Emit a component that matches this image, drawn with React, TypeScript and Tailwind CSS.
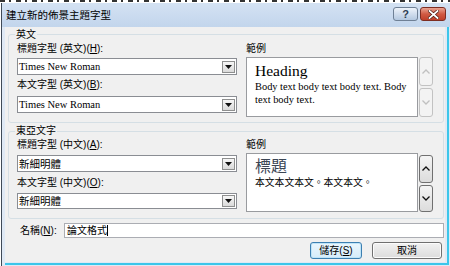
import React from "react";

const ui = "font-['Liberation_Sans','Noto_Sans_CJK_TC',sans-serif]";
const serif = "font-['Liberation_Serif',serif]";

function DropArrow() {
  return (
    <div className="w-[13px] h-[12px] mr-[1px] border border-[#8e8f8f] bg-gradient-to-b from-[#f7f7f7] to-[#dadada] flex items-center justify-center">
      <svg width="7" height="4" viewBox="0 0 7 4">
        <path d="M0 0 H7 L3.5 4 Z" fill="#111" />
      </svg>
    </div>
  );
}

function Select({ value, serifFont, h }: { value: string; serifFont?: boolean; h: string }) {
  return (
    <div className={`${h} w-full bg-white border border-[#8a8d93] flex items-center justify-between`}>
      <span className={`pl-[1px] text-[10.5px] leading-[12px] text-black ${serifFont ? serif : ui}`}>{value}</span>
      <DropArrow />
    </div>
  );
}

function Spin({ enabled }: { enabled: boolean }) {
  const box = enabled
    ? "border-[#707070] bg-gradient-to-b from-[#f4f4f4] to-[#dcdcdc]"
    : "border-[#c2c2c2] bg-[#f3f3f3]";
  const stroke = enabled ? "#111" : "#c0c0c0";
  return (
    <div className="w-[14px] h-full flex flex-col gap-[2px]">
      <div className={`flex-1 rounded-[3px] border ${box} flex items-center justify-center`}>
        <svg width="8" height="5" viewBox="0 0 8 5">
          <path d="M0.5 4.5 L4 1 L7.5 4.5" fill="none" stroke={stroke} strokeWidth="1.3" />
        </svg>
      </div>
      <div className={`flex-1 rounded-[3px] border ${box} flex items-center justify-center`}>
        <svg width="8" height="5" viewBox="0 0 8 5">
          <path d="M0.5 0.5 L4 4 L7.5 0.5" fill="none" stroke={stroke} strokeWidth="1.3" />
        </svg>
      </div>
    </div>
  );
}

function Label({ children }: { children: React.ReactNode }) {
  return <div className={`h-[12px] text-[10px] leading-[12px] text-black whitespace-nowrap ${ui}`}>{children}</div>;
}

export default function App() {
  return (
    <div className={`w-[450px] h-[266px] bg-white overflow-hidden flex flex-col ${ui}`}>
      {/* cropped content above */}
      <div className="h-[3px] bg-white flex items-start">
        <div className="w-full h-[2px] bg-[repeating-linear-gradient(90deg,#333_0_5px,#fff_5px_9px,#333_9px_11px,#fff_11px_16px)]" />
      </div>
      {/* window */}
      <div className="flex-1 flex flex-col ml-[1px] border-l border-[#3f4a57] bg-[#dfe9f5]">
        {/* title bar */}
        <div className="h-[24px] flex items-start justify-between bg-gradient-to-b from-[#d4e2f3] to-[#c2d5ec]">
          <div className="pl-[4px] h-full flex items-center text-[10.5px] leading-[12px] text-black">建立新的佈景主題字型</div>
          <div className="flex gap-[2px] pt-[4px] pr-[4px]">
            <div className="w-[25px] h-[14px] rounded-[3px] border border-[#6f8095] bg-gradient-to-b from-[#eef3fa] to-[#b4c8e0] flex items-center justify-center">
              <span className="text-[11px] leading-[12px] font-bold text-[#2c3d52] font-['Liberation_Sans',sans-serif]">?</span>
            </div>
            <div className="w-[26px] h-[14px] rounded-[3px] border border-[#7d2d22] bg-gradient-to-b from-[#e9a392] via-[#d15a43] to-[#c0402a] flex items-center justify-center">
              <svg width="11" height="9" viewBox="0 0 11 9">
                <path d="M1.5 1 L9.5 8 M9.5 1 L1.5 8" stroke="#4a1810" strokeWidth="3.2" strokeLinecap="square" />
                <path d="M1.5 1 L9.5 8 M9.5 1 L1.5 8" stroke="#fff" strokeWidth="1.8" strokeLinecap="square" />
              </svg>
            </div>
          </div>
        </div>
        {/* frame around client */}
        <div className="flex-1 flex pl-[3px] pr-[1px] pb-[1px]">
          <div className="flex-1 flex border-r-[2px] border-b-[2px] border-[#3cc6ea]">
            <div className="flex-1 flex mr-[2px] mb-[1px]">
              {/* client */}
              <div className="flex-1 bg-[#f0f0f0] flex flex-col pl-[3px] pr-[1px]">
                {/* Group 1 */}
                <div className="relative mt-[7px] border border-[#d5dfe5] rounded-[3px] pt-[8px] pb-[5px] pl-[8px] pr-[9px] flex gap-[9px]">
                  <div className="absolute left-[6px] top-[-6px] px-[1px] bg-[#f0f0f0]">
                    <Label>英文</Label>
                  </div>
                  <div className="w-[220px] flex flex-col">
                    <Label>
                      標題字型 (英文)(<span className="underline">H</span>):
                    </Label>
                    <div className="mt-[3px]">
                      <Select value="Times New Roman" serifFont h="h-[17px]" />
                    </div>
                    <div className="mt-[4px]">
                      <Label>
                        本文字型 (英文)(<span className="underline">B</span>):
                      </Label>
                    </div>
                    <div className="mt-[5px]">
                      <Select value="Times New Roman" serifFont h="h-[17px]" />
                    </div>
                  </div>
                  <div className="flex-1 flex flex-col">
                    <Label>範例</Label>
                    <div className="mt-[2px] h-[60px] flex gap-[1px]">
                      <div className={`w-[172px] h-full bg-white border border-[#999b9f] pl-[8px] pt-[3px] ${serif} text-black`}>
                        <div className="text-[15.5px] leading-[19px]">Heading</div>
                        <div className="text-[10.4px] leading-[13px] pr-[4px]">Body text body text body text. Body text body text.</div>
                      </div>
                      <Spin enabled={false} />
                    </div>
                  </div>
                </div>
                {/* Group 2 */}
                <div className="relative mt-[8px] border border-[#d5dfe5] rounded-[3px] pt-[7px] pb-[6px] pl-[8px] pr-[9px] flex gap-[9px]">
                  <div className="absolute left-[6px] top-[-7px] px-[1px] bg-[#f0f0f0]">
                    <Label>東亞文字</Label>
                  </div>
                  <div className="w-[220px] flex flex-col">
                    <Label>
                      標題字型 (中文)(<span className="underline">A</span>):
                    </Label>
                    <div className="mt-[4px]">
                      <Select value="新細明體" h="h-[17px]" />
                    </div>
                    <div className="mt-[5px]">
                      <Label>
                        本文字型 (中文)(<span className="underline">O</span>):
                      </Label>
                    </div>
                    <div className="mt-[4px]">
                      <Select value="新細明體" h="h-[16px]" />
                    </div>
                  </div>
                  <div className="flex-1 flex flex-col">
                    <Label>範例</Label>
                    <div className="mt-[2px] h-[59px] flex gap-[1px]">
                      <div className="w-[172px] h-full bg-white border border-[#999b9f] pl-[8px] pt-[3px]">
                        <div className="text-[16px] leading-[20px] text-[#3b4654]">標題</div>
                        <div className="text-[9.8px] leading-[12px] text-black">本文本文本文。本文本文。</div>
                      </div>
                      <div className="h-full pt-[2px]">
                        <Spin enabled />
                      </div>
                    </div>
                  </div>
                </div>
                {/* name row */}
                <div className="mt-[4px] flex items-center pl-[12px]">
                  <div className="w-[44px] text-[10px] leading-[12px] text-black">
                    名稱(<span className="underline">N</span>):
                  </div>
                  <div className="flex-1 h-[15px] bg-white border border-[#abadb3] flex items-center">
                    <span className="pl-[2px] text-[10px] leading-[12px] text-black">論文格式</span>
                    <span className="w-[1px] h-[11px] bg-black" />
                  </div>
                </div>
                {/* buttons */}
                <div className="mt-[4px] flex justify-end gap-[10px] pr-[2px]">
                  <div className="w-[52px] h-[17px] rounded-[3px] border border-[#3c7fb1] shadow-[inset_0_0_0_1px_#bfe4f8] bg-gradient-to-b from-[#eaf6fd] to-[#d6ecf9] flex items-center justify-center text-[10px] leading-[12px] text-black">
                    儲存(<span className="underline">S</span>)
                  </div>
                  <div className="w-[70px] h-[17px] rounded-[3px] border border-[#707070] shadow-[inset_0_0_0_1px_#fcfcfc] bg-gradient-to-b from-[#f2f2f2] to-[#dcdcdc] flex items-center justify-center text-[10px] leading-[12px] text-black">
                    取消
                  </div>
                </div>
              </div>
            </div>
          </div>
        </div>
      </div>
    </div>
  );
}
